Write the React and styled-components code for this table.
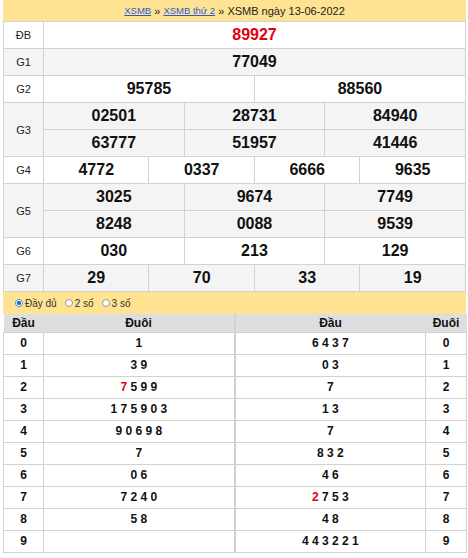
import React from "react";
import styled, { createGlobalStyle } from "styled-components";

const Global = createGlobalStyle`
  html, body { margin: 0; padding: 0; background: #fff; }
  body { font-family: "Liberation Sans", Arial, sans-serif; color: #000; }
`;

const Page = styled.div`
  padding: 0 2px 0 3px;
  width: 463px;
`;

const Caption = styled.div`
  background: #ffe392;
  height: 21px;
  display: flex;
  align-items: center;
  justify-content: center;
  font-size: 11px;
  color: #222;
  white-space: pre;
`;

const Link = styled.a`
  color: #2a5bd7;
  text-decoration: underline;
  font-size: 9.5px;
  cursor: pointer;
`;

const Table = styled.table`
  width: 100%;
  border-collapse: collapse;
  table-layout: fixed;
`;

const Row = styled.tr`
  background: ${(p) => (p.$alt ? "#f4f4f4" : "#fff")};
  height: 27px;
`;

const Label = styled.td`
  border: 1px solid #d2d2d2;
  text-align: center;
  font-size: 11px;
  color: #222;
  padding: 0;
`;

const Num = styled.td`
  border: 1px solid #d2d2d2;
  text-align: center;
  font-size: 16px;
  font-weight: bold;
  padding: 0;
  color: ${(p) => (p.$red ? "#e3000f" : "#111")};
`;

const Options = styled.div`
  background: #ffe392;
  height: 22px;
  display: flex;
  align-items: center;
  gap: 8px;
  padding-left: 12px;
  font-size: 10px;
  color: #333;
`;

const Option = styled.label`
  display: flex;
  align-items: center;
  gap: 2px;
`;

const Radio = styled.span`
  box-sizing: border-box;
  width: 8px;
  height: 8px;
  border-radius: 50%;
  border: 1px solid ${(p) => (p.$on ? "#4a8ad8" : "#9a9a9a")};
  background: ${(p) => (p.$on ? "radial-gradient(circle, #1e6ad6 0 1.8px, #fff 2.3px)" : "#fff")};
`;

const LotoTable = styled.table`
  width: 100%;
  border-collapse: collapse;
  table-layout: fixed;
`;

const HeadRow = styled.tr`
  background: #dedede;
  height: 18px;
`;

const Head = styled.th`
  font-size: 12px;
  font-weight: bold;
  padding: 0;
  text-align: center;
  color: #111;
  border-left: ${(p) => (p.$split ? "2px solid #d2d2d2" : "none")};
`;

const LotoRow = styled.tr`
  height: 22px;
`;

const Cell = styled.td`
  border: 1px solid #d2d2d2;
  border-left: ${(p) => (p.$split ? "2px solid #d2d2d2" : "1px solid #d2d2d2")};
  text-align: center;
  font-size: 12px;
  font-weight: bold;
  padding: 0;
  color: #111;
  white-space: pre;
`;

const Red = styled.span`
  color: #e3000f;
`;

const prizes = [
  { label: "ĐB", nums: ["89927"], red: true },
  { label: "G1", nums: ["77049"] },
  { label: "G2", nums: ["95785", "88560"] },
  { label: "G3", nums: ["02501", "28731", "84940", "63777", "51957", "41446"], per: 3 },
  { label: "G4", nums: ["4772", "0337", "6666", "9635"] },
  { label: "G5", nums: ["3025", "9674", "7749", "8248", "0088", "9539"], per: 3 },
  { label: "G6", nums: ["030", "213", "129"] },
  { label: "G7", nums: ["29", "70", "33", "19"] },
];

const loto = [
  ["0", "1", "6 4 3 7", "0"],
  ["1", "3 9", "0 3", "1"],
  ["2", [<Red key="r">7</Red>, " 5 9 9"], "7", "2"],
  ["3", "1 7 5 9 0 3", "1 3", "3"],
  ["4", "9 0 6 9 8", "7", "4"],
  ["5", "7", "8 3 2", "5"],
  ["6", "0 6", "4 6", "6"],
  ["7", "7 2 4 0", [<Red key="r">2</Red>, " 7 5 3"], "7"],
  ["8", "5 8", "4 8", "8"],
  ["9", "", "4 4 3 2 2 1", "9"],
];

function PrizeRows({ p, alt }) {
  const per = p.per || p.nums.length;
  const rows = [];
  for (let i = 0; i < p.nums.length; i += per) rows.push(p.nums.slice(i, i + per));
  const span = 12 / per;
  return rows.map((r, ri) => (
    <Row key={ri} $alt={alt}>
      {ri === 0 && <Label rowSpan={rows.length}>{p.label}</Label>}
      {r.map((n) => (
        <Num key={n} colSpan={span} $red={p.red}>
          {n}
        </Num>
      ))}
    </Row>
  ));
}

export default function App() {
  return (
    <Page>
      <Global />
      <Caption>
        <Link>XSMB</Link>
        <span> » </span>
        <Link>XSMB thứ 2</Link>
        <span> » XSMB ngày 13-06-2022</span>
      </Caption>
      <Table>
        <colgroup>
          <col style={{ width: 40 }} />
          {Array.from({ length: 12 }).map((_, i) => (
            <col key={i} />
          ))}
        </colgroup>
        <tbody>
          {prizes.map((p, i) => (
            <PrizeRows key={p.label} p={p} alt={i % 2 === 1} />
          ))}
        </tbody>
      </Table>
      <Options>
        <Option>
          <Radio $on />
          Đầy đủ
        </Option>
        <Option>
          <Radio />2 số
        </Option>
        <Option>
          <Radio />3 số
        </Option>
      </Options>
      <LotoTable>
        <colgroup>
          <col style={{ width: 40 }} />
          <col style={{ width: 191 }} />
          <col style={{ width: 191 }} />
          <col style={{ width: 41 }} />
        </colgroup>
        <tbody>
          <HeadRow>
            <Head>Đầu</Head>
            <Head>Đuôi</Head>
            <Head $split>Đầu</Head>
            <Head>Đuôi</Head>
          </HeadRow>
          {loto.map((r) => (
            <LotoRow key={r[0]}>
              <Cell>{r[0]}</Cell>
              <Cell>{r[1]}</Cell>
              <Cell $split>{r[2]}</Cell>
              <Cell>{r[3]}</Cell>
            </LotoRow>
          ))}
        </tbody>
      </LotoTable>
    </Page>
  );
}
